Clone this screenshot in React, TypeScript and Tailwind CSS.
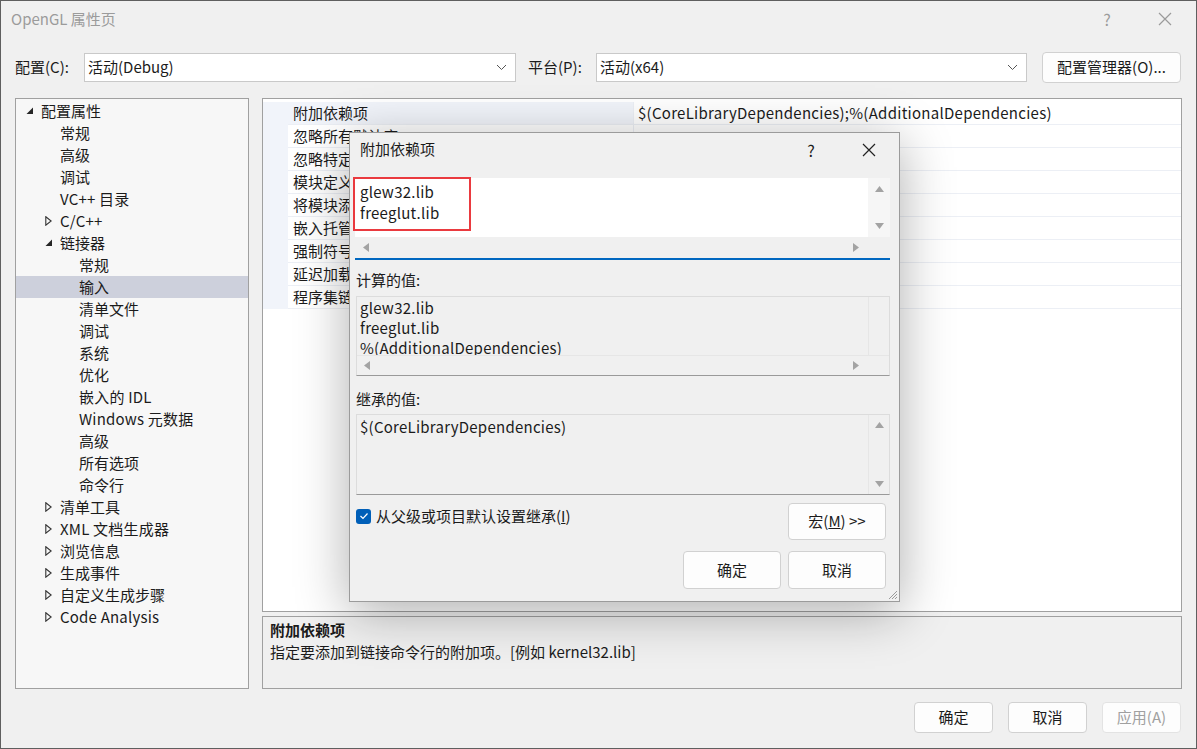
import type { ReactNode } from "react";

const font = "font-['Noto_Sans_CJK_SC',sans-serif]";

type TreeItem = { label: string; level: number; arrow?: "open" | "closed"; selected?: boolean };

const tree: TreeItem[] = [
  { label: "配置属性", level: 0, arrow: "open" },
  { label: "常规", level: 1 },
  { label: "高级", level: 1 },
  { label: "调试", level: 1 },
  { label: "VC++ 目录", level: 1 },
  { label: "C/C++", level: 1, arrow: "closed" },
  { label: "链接器", level: 1, arrow: "open" },
  { label: "常规", level: 2 },
  { label: "输入", level: 2, selected: true },
  { label: "清单文件", level: 2 },
  { label: "调试", level: 2 },
  { label: "系统", level: 2 },
  { label: "优化", level: 2 },
  { label: "嵌入的 IDL", level: 2 },
  { label: "Windows 元数据", level: 2 },
  { label: "高级", level: 2 },
  { label: "所有选项", level: 2 },
  { label: "命令行", level: 2 },
  { label: "清单工具", level: 1, arrow: "closed" },
  { label: "XML 文档生成器", level: 1, arrow: "closed" },
  { label: "浏览信息", level: 1, arrow: "closed" },
  { label: "生成事件", level: 1, arrow: "closed" },
  { label: "自定义生成步骤", level: 1, arrow: "closed" },
  { label: "Code Analysis", level: 1, arrow: "closed" },
];

const props = [
  "附加依赖项",
  "忽略所有默认库",
  "忽略特定默认库",
  "模块定义文件",
  "将模块添加到程序集",
  "嵌入托管资源文件",
  "强制符号引用",
  "延迟加载的 DLL",
  "程序集链接资源",
];

function OpenArrow() {
  return (
    <svg width="8" height="8" viewBox="0 0 8 8">
      <polygon points="7,0.5 7,7 0.5,7" fill="#262626" />
    </svg>
  );
}

function ClosedArrow() {
  return (
    <svg width="7" height="10" viewBox="0 0 7 10">
      <polygon points="0.8,0.8 6.2,5 0.8,9.2" fill="none" stroke="#333" strokeWidth="1.1" />
    </svg>
  );
}

function Tri({ dir }: { dir: "up" | "down" | "left" | "right" }) {
  const pts = {
    up: "0,7 4.5,1 9,7",
    down: "0,1 4.5,7 9,1",
    left: "7,0 1,4.5 7,9",
    right: "1,0 7,4.5 1,9",
  }[dir];
  const vertical = dir === "up" || dir === "down";
  return (
    <svg width={vertical ? 9 : 8} height={vertical ? 8 : 9} viewBox={vertical ? "0 0 9 8" : "0 0 8 9"}>
      <polygon points={pts} fill="#a3a3a3" />
    </svg>
  );
}

function Chevron() {
  return (
    <svg width="11" height="7" viewBox="0 0 11 7">
      <polyline points="1,1 5.5,5.5 10,1" fill="none" stroke="#555" strokeWidth="1" />
    </svg>
  );
}

function Button({ children, className = "" }: { children: ReactNode; className?: string }) {
  return (
    <div
      className={`flex items-center justify-center rounded-[4px] border border-[#d1d1d1] bg-[#fdfdfd] text-[15px] text-[#1b1b1b] ${className}`}
    >
      {children}
    </div>
  );
}

function Combo({ text, className = "" }: { text: string; className?: string }) {
  return (
    <div
      className={`flex h-[29px] items-center justify-between border border-[#c9c9c9] bg-white pl-[3px] pr-[8px] text-[15px] text-[#1b1b1b] ${className}`}
    >
      <span>{text}</span>
      <Chevron />
    </div>
  );
}

function Dialog() {
  return (
    <div className="absolute left-[348px] top-[131px] flex h-[470px] w-[551px] flex-col border border-[#9b9b9b] bg-[#f0f0f0] shadow-[0_10px_50px_rgba(0,0,0,0.32)]">
      {/* title bar */}
      <div className="flex h-[39px] shrink-0 items-center pb-[6px] pl-[10px] text-[15px] text-[#1b1b1b]">
        <span className="flex-1">附加依赖项</span>
        <span className="w-[20px] text-center text-[16px]">?</span>
        <span className="ml-[38px] mr-[20px] flex w-[20px] justify-center">
          <svg width="14" height="14" viewBox="0 0 14 14">
            <path d="M1 1 L13 13 M13 1 L1 13" stroke="#222" strokeWidth="1.2" />
          </svg>
        </span>
      </div>

      <div className="flex flex-1 flex-col px-[5px] pt-[6px] pb-[10px]">
        {/* editable box */}
        <div className="mr-[4px] flex h-[82px] flex-col border-b-2 border-[#0067c0] bg-white">
          <div className="flex h-[59px]">
            <div className="flex-1 pl-[5px] pt-[3px] text-[15px] leading-[21px] tracking-[0.25px] text-[#1b1b1b]">
              <div>glew32.lib</div>
              <div>freeglut.lib</div>
            </div>
            <div className="flex w-[22px] flex-col items-center justify-between bg-[#f6f6f6] py-[7px]">
              <Tri dir="up" />
              <Tri dir="down" />
            </div>
          </div>
          <div className="flex h-[21px] items-center bg-[#f0f0f0]">
            <div className="flex flex-1 items-center justify-between pl-[7px] pr-[8px]">
              <Tri dir="left" />
              <Tri dir="right" />
            </div>
            <div className="w-[22px]" />
          </div>
        </div>

        <div className="mt-[9px] pl-[1px] text-[15px] leading-[22px] text-[#1b1b1b]">计算的值:</div>
        <div className="ml-[1px] mr-[4px] mt-[5px] flex h-[80px] flex-col border border-[#dcdcdc] border-b-[#9a9a9a] bg-[#f0f0f0]">
          <div className="flex h-[58px] overflow-hidden">
            <div className="flex-1 overflow-hidden pl-[3px] pt-[1px] text-[15px] leading-[20px] tracking-[0.25px] text-[#1b1b1b]">
              <div>glew32.lib</div>
              <div>freeglut.lib</div>
              <div>%(AdditionalDependencies)</div>
            </div>
            <div className="w-[21px] border-l border-[#e6e6e6]" />
          </div>
          <div className="flex h-[20px] items-center border-t border-[#e6e6e6]">
            <div className="flex flex-1 items-center justify-between pl-[6px] pr-[8px]">
              <Tri dir="left" />
              <Tri dir="right" />
            </div>
            <div className="w-[21px]" />
          </div>
        </div>

        <div className="mt-[12px] pl-[1px] text-[15px] leading-[22px] text-[#1b1b1b]">继承的值:</div>
        <div className="ml-[1px] mr-[4px] mt-[4px] flex h-[81px] border border-[#dcdcdc] border-b-[#9a9a9a] bg-[#f0f0f0]">
          <div className="flex-1 pl-[3px] pt-[2px] text-[15px] leading-[20px] tracking-[0.25px] text-[#1b1b1b]">
            $(CoreLibraryDependencies)
          </div>
          <div className="flex w-[21px] flex-col items-center justify-between border-l border-[#e6e6e6] py-[6px]">
            <Tri dir="up" />
            <Tri dir="down" />
          </div>
        </div>

        {/* checkbox + macro button */}
        <div className="mr-[8px] mt-[8px] flex items-start justify-between">
          <div className="mt-[2px] flex items-center gap-[5px] pl-[1px] text-[15px] text-[#1b1b1b]">
            <span className="flex h-[15px] w-[15px] items-center justify-center rounded-[3px] bg-[#005fb8]">
              <svg width="10" height="8" viewBox="0 0 10 8">
                <polyline points="1.5,4 4,6.5 8.5,1.5" fill="none" stroke="white" strokeWidth="1.2" />
              </svg>
            </span>
            <span>
              从父级或项目默认设置继承(<span className="underline">I</span>)
            </span>
          </div>
          <Button className="h-[37px] w-[98px]">
            宏(<span className="underline">M</span>) &gt;&gt;
          </Button>
        </div>

        <div className="mr-[8px] mt-[11px] flex justify-end gap-[7px]">
          <Button className="h-[38px] w-[98px] border-[#0067c0]">确定</Button>
          <Button className="h-[38px] w-[98px]">取消</Button>
        </div>
      </div>

      {/* resize grip */}
      <svg className="absolute bottom-[1px] right-[1px]" width="12" height="12" viewBox="0 0 12 12">
        <path d="M11 3 L3 11 M11 6 L6 11 M11 9 L9 11" stroke="#9a9a9a" strokeWidth="1" />
      </svg>

      {/* red highlight */}
      <div className="pointer-events-none absolute left-[3px] top-[44px] h-[54px] w-[118px] border-2 border-[#ea3a3f]" />
    </div>
  );
}

export default function App() {
  return (
    <div className={`${font} relative h-[749px] w-[1197px] overflow-hidden border border-[#5f5f5f] bg-[#f0f0f0]`}>
      {/* title bar */}
      <div className="flex h-[38px] items-center pb-[2px] pl-[10px] text-[15px] text-[#9b9b9b]">
        <span className="flex-1">OpenGL 属性页</span>
        <span className="w-[20px] text-center text-[16px]">?</span>
        <span className="ml-[38px] mr-[21px] flex w-[20px] justify-center">
          <svg width="14" height="14" viewBox="0 0 14 14">
            <path d="M1 1 L13 13 M13 1 L1 13" stroke="#9b9b9b" strokeWidth="1.2" />
          </svg>
        </span>
      </div>

      {/* configuration row */}
      <div className="mt-[13px] flex items-center pl-[14px] pr-[15px] text-[15px] text-[#1b1b1b]">
        <span className="w-[69px]">配置(C):</span>
        <Combo text="活动(Debug)" className="w-[432px]" />
        <span className="ml-[12px] w-[68px]">平台(P):</span>
        <Combo text="活动(x64)" className="w-[431px]" />
        <Button className="ml-[15px] h-[31px] w-[139px]">配置管理器(O)...</Button>
      </div>

      {/* body */}
      <div className="mt-[15px] flex gap-[13px] pl-[14px] pr-[14px]">
        {/* tree */}
        <div className="h-[591px] w-[234px] border border-[#a0a0a0] bg-[#f7f7f7] pt-[1px]">
          {tree.map((t, i) => (
            <div
              key={i}
              className={`flex h-[22px] items-center text-[15px] text-[#1b1b1b] ${t.selected ? "bg-[#cdd0dc]" : ""}`}
              style={{ paddingLeft: 7 + t.level * 19 }}
            >
              <span className="flex w-[18px] items-center justify-start pl-[3px]">
                {t.arrow === "open" && <OpenArrow />}
                {t.arrow === "closed" && <ClosedArrow />}
              </span>
              <span className={/[A-Za-z]/.test(t.label) ? "tracking-[0.2px]" : ""}>{t.label}</span>
            </div>
          ))}
        </div>

        {/* right panel */}
        <div className="flex flex-1 flex-col gap-[4px]">
          <div className="h-[514px] border border-[#a0a0a0] bg-white pt-[3px]">
            {props.map((p, i) => (
              <div key={i} className="flex h-[23px] text-[15px] text-[#1b1b1b]">
                <div className="w-[25px] bg-[#f1f4fa]" />
                <div
                  className={`flex w-[345px] items-center border-b border-[#eceff5] pl-[5px] ${i === 0 ? "bg-[#f1f4fa]" : ""}`}
                >
                  <span className="whitespace-nowrap">{p}</span>
                </div>
                <div className="flex flex-1 items-center border-b border-l border-[#eceff5] pl-[4px] tracking-[0.27px]">
                  {i === 0 ? "$(CoreLibraryDependencies);%(AdditionalDependencies)" : ""}
                </div>
              </div>
            ))}
          </div>
          <div className="h-[73px] border border-[#a0a0a0] bg-[#f0f0f0] pl-[7px] pt-[2px] text-[15px] leading-[22px] text-[#1b1b1b]">
            <div className="font-bold">附加依赖项</div>
            <div>指定要添加到链接命令行的附加项。[例如 kernel32.lib]</div>
          </div>
        </div>
      </div>

      {/* bottom buttons */}
      <div className="mt-[13px] flex justify-end gap-[15px] pr-[15px]">
        <Button className="h-[31px] w-[79px]">确定</Button>
        <Button className="h-[31px] w-[79px]">取消</Button>
        <Button className="h-[31px] w-[79px] border-[#e3e3e3] bg-[#f5f5f5] text-[#a0a0a0]">应用(A)</Button>
      </div>

      <Dialog />
    </div>
  );
}
